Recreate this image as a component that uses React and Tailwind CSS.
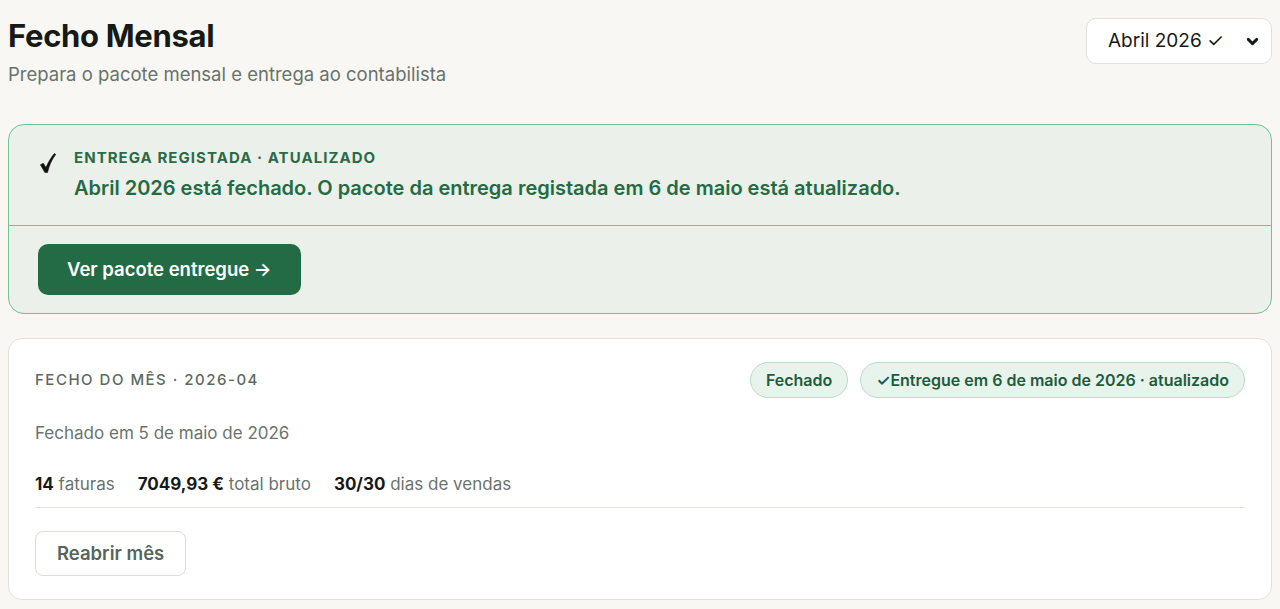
import { ChevronDown } from 'lucide-react';

const font = { fontFamily: 'Inter, "Noto Sans", sans-serif' };

// Visto desenhado à mão, como no aviso
const Tick = () => (
    <svg width="16" height="20" viewBox="0 0 15 19" className="shrink-0 mt-[5px]">
        <path
            d="M0.3 11.2 L3 9.8 L5.6 13.8 C7.8 8.6 10.4 4.2 13.6 0.5 L14.8 1.4 C11.4 5.8 8.8 11 7 18.6 L4.6 18.6 Z"
            fill="#111"
            stroke="#111"
            strokeWidth="0.6"
            strokeLinejoin="round"
        />
    </svg>
);

const Badge = ({ children }) => (
    <span className="h-[36px] px-[15px] flex items-center rounded-full bg-[#e8f3ec] border border-[#b9dcc8] text-[16px] font-semibold text-[#1f5c3d]">
        {children}
    </span>
);

const App = () => {
    return (
        <div className="min-h-screen bg-[#f8f7f3] text-[#161a17] px-2 pt-[18px] pb-2" style={font}>
            {/* Cabeçalho */}
            <div className="flex items-start justify-between">
                <div>
                    <h1 className="text-[31px] leading-9 font-bold tracking-[-0.01em]">Fecho Mensal</h1>
                    <p className="text-[18.5px] leading-6 text-[#66736b] mt-[8px]">Prepara o pacote mensal e entrega ao contabilista</p>
                </div>
                <button className="w-[186px] h-[46px] bg-white border border-[#e2e0da] rounded-[10px] flex items-center justify-between pl-[21px] pr-[10px] text-[19px] text-[#161a17]">
                    <span>Abril 2026 ✓</span>
                    <ChevronDown size={17} strokeWidth={4} />
                </button>
            </div>

            {/* Aviso de entrega */}
            <div className="mt-[38px] border border-[#6dc495] bg-[#ebf0ea] rounded-[16px] overflow-hidden">
                <div className="flex gap-[18px] px-[31px] pt-[23px] pb-[23px] border-b border-[#6dc495]">
                    <Tick />
                    <div>
                        <p className="text-[15px] leading-5 font-bold tracking-[0.07em] text-[#2a6b47]">ENTREGA REGISTADA · ATUALIZADO</p>
                        <p className="text-[20px] leading-7 font-semibold text-[#236b45] mt-[6px]">Abril 2026 está fechado. O pacote da entrega registada em 6 de maio está atualizado.</p>
                    </div>
                </div>
                <div className="px-[29px] pt-[18px] pb-[18px]">
                    <button className="h-[51px] px-[29px] bg-[#236b45] text-white rounded-[10px] text-[18.5px] font-semibold">
                        Ver pacote entregue →
                    </button>
                </div>
            </div>

            {/* Cartão do mês */}
            <div className="mt-[24px] bg-white border border-[#e3e1dc] rounded-[14px] px-[26px] pt-[23px] pb-[23px]">
                <div className="flex items-center justify-between">
                    <p className="text-[15px] font-medium tracking-[0.1em] text-[#5c6a62]">FECHO DO MÊS · 2026-04</p>
                    <div className="flex items-center gap-[12px]">
                        <Badge>Fechado</Badge>
                        <Badge>✓Entregue em 6 de maio de 2026 · atualizado</Badge>
                    </div>
                </div>
                <p className="text-[17px] text-[#6b736e] mt-[23px]">Fechado em 5 de maio de 2026</p>
                <div className="flex gap-[23px] text-[17px] mt-[25px] pb-[10px] border-b border-[#e6e4df]">
                    <span><b className="font-bold text-[#161a17]">14</b> <span className="text-[#6b736e]">faturas</span></span>
                    <span><b className="font-bold text-[#161a17]">7049,93 €</b> <span className="text-[#6b736e]">total bruto</span></span>
                    <span><b className="font-bold text-[#161a17]">30/30</b> <span className="text-[#6b736e]">dias de vendas</span></span>
                </div>
                <button className="mt-[23px] h-[45px] px-[21px] border border-[#dedcd6] rounded-[8px] text-[18.5px] font-semibold text-[#56665c]">
                    Reabrir mês
                </button>
            </div>
        </div>
    );
};

export default App;
